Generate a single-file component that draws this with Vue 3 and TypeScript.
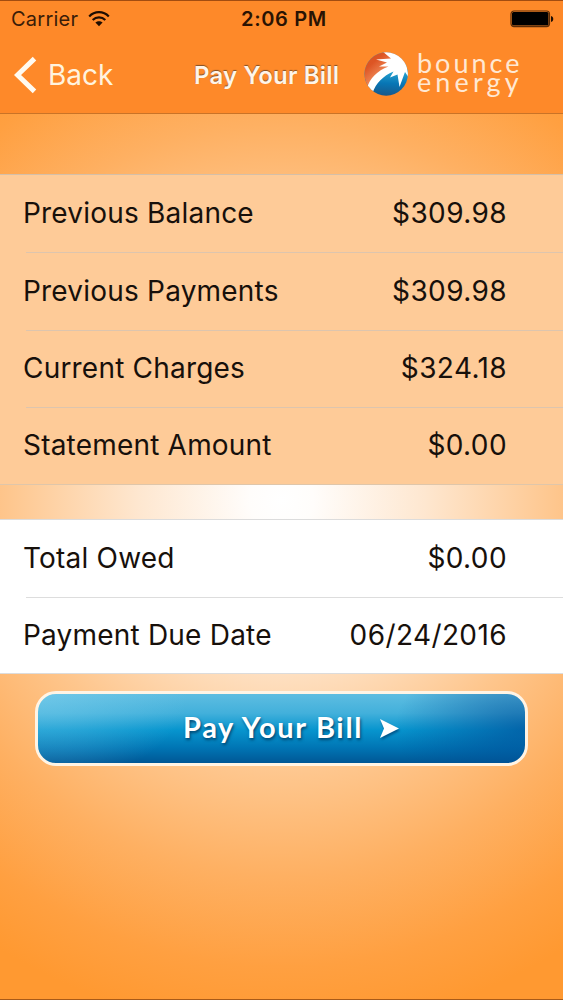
<script setup lang="ts">
interface BillRow {
  label: string
  value: string
}

const charges: BillRow[] = [
  { label: 'Previous Balance', value: '$309.98' },
  { label: 'Previous Payments', value: '$309.98' },
  { label: 'Current Charges', value: '$324.18' },
  { label: 'Statement Amount', value: '$0.00' },
]

const totals: BillRow[] = [
  { label: 'Total Owed', value: '$0.00' },
  { label: 'Payment Due Date', value: '06/24/2016' },
]
</script>

<template>
  <main class="screen">
    <header class="top">
      <div class="status">
        <div class="carrier">
          <span>Carrier</span>
          <svg class="wifi" viewBox="0 0 22 16" width="22" height="16">
            <g fill="none" stroke="#1e0d02" stroke-width="2.2">
              <path d="M1.2 5.4C6.6-.2 15.400-.2 20.800 5.400" />
              <path d="M4.700 9C8.200 5.500 13.800 5.500 17.300 9" />
            </g>
            <path d="M7.400 11.600C9.500 9.700 12.500 9.700 14.600 11.600L11 15.300Z" fill="#1e0d02" />
          </svg>
        </div>
        <span class="time">2:06 PM</span>
        <svg class="battery" viewBox="0 0 44 18" width="44" height="18">
          <rect x="1" y="1" width="38.500" height="15.600" rx="3" fill="none" stroke="#5a2c08" stroke-width="1.200" />
          <rect x="2" y="2" width="36.500" height="13.600" rx="1.500" fill="#000" />
          <path d="M41 6C44 6.500 44 11.500 41 12Z" fill="#1e0d02" />
        </svg>
      </div>
      <nav class="nav">
        <button class="back" type="button">
          <svg viewBox="0 0 24 38" width="24" height="38">
            <path d="M20.500 2.600L3.500 19L20.500 35.400" fill="none" stroke="#fffaf0" stroke-width="5" />
          </svg>
          <span>Back</span>
        </button>
        <h1 class="title">Pay Your Bill</h1>
        <div class="brand">
          <svg class="ball" viewBox="0 0 45 46" width="45" height="46">
            <defs>
              <linearGradient id="ballRed" x1="0" y1="0" x2="1" y2="1">
                <stop offset="0" stop-color="#d9531f" />
                <stop offset=".25" stop-color="#dd5524" />
                <stop offset=".5" stop-color="#f08a58" />
              </linearGradient>
              <linearGradient id="ballBlue" x1=".5" y1="0" x2=".45" y2="1">
                <stop offset=".4" stop-color="#2aa9d4" />
                <stop offset=".7" stop-color="#0876b5" />
                <stop offset="1" stop-color="#1a5585" />
              </linearGradient>
              <clipPath id="ballClip"><circle cx="22.200" cy="23" r="21.700" /></clipPath>
            </defs>
            <g clip-path="url(#ballClip)">
              <rect width="45" height="46" fill="url(#ballBlue)" />
              <path d="M0 0H45V12L21 20Q9 27 4 39H0Z" fill="url(#ballRed)" />
              <path d="M3 37C6 27 13 20 24.500 15.500L15 15.500L23 11.500L12 8.500L27 7.500L18 0C30-1 38 4 42 11L45 27L41 21L35.500 36L33.500 23.500L26 26.500L29.500 20.500C19 25 12 32 8.500 42Z" fill="#fff" />
            </g>
          </svg>
          <div class="wordmark">
            <span class="bounce">bounce</span>
            <span class="energy">energy</span>
          </div>
        </div>
      </nav>
    </header>

    <section class="list charges">
      <div v-for="row in charges" :key="row.label" class="row">
        <span class="label">{{ row.label }}</span>
        <span class="value">{{ row.value }}</span>
      </div>
    </section>

    <section class="list totals">
      <div v-for="row in totals" :key="row.label" class="row">
        <span class="label">{{ row.label }}</span>
        <span class="value">{{ row.value }}</span>
      </div>
    </section>

    <button class="pay" type="button">
      <span>Pay Your Bill</span>
      <svg viewBox="0 0 21 21" width="21" height="21">
        <path d="M1 1L20 10.500L1 20L5 10.500Z" fill="#fff" />
      </svg>
    </button>
  </main>
</template>

<style>
body {
  margin: 0;
}
</style>

<style scoped>
.screen {
  box-sizing: border-box;
  width: 563px;
  height: 1000px;
  overflow: hidden;
  display: flex;
  flex-direction: column;
  font-family: Inter, "Liberation Sans", sans-serif;
  color: #17100b;
  border-bottom: 1px solid #a85a18;
  background: radial-gradient(ellipse 530px 530px at 50% 500px, #fff 0%, #fffdfb 6%, #fee7d0 27%, #fec68d 52%, #feb062 71%, #ffa041 88%, #ff9931 100%);
}
.top {
  box-sizing: border-box;
  flex: none;
  height: 114px;
  background: #fe8929;
  border-top: 1px solid #a34c10;
  border-bottom: 1px solid #c97327;
}
.status {
  height: 36px;
  display: grid;
  grid-template-columns: 1fr auto 1fr;
  align-items: center;
  padding: 0 9px 0 11px;
  font-size: 20px;
}
.carrier {
  display: flex;
  align-items: center;
  gap: 10px;
  color: #3a1c08;
  letter-spacing: .25px;
}
.time {
  font-weight: 600;
  color: #2a1303;
  letter-spacing: .65px;
  margin-left: 3px;
}
.battery {
  justify-self: end;
}
.nav {
  height: 76px;
  display: flex;
  align-items: center;
}
button {
  border: 0;
  background: none;
  font-family: inherit;
}
.back {
  width: 194px;
  box-sizing: border-box;
  padding: 0 0 0 14px;
  display: flex;
  align-items: center;
  gap: 10px;
  color: #fff3df;
  font-size: 28px;
}
.title {
  width: 170px;
  margin: 0;
  font-size: 24px;
  font-weight: 600;
  letter-spacing: .15px;
  color: #fff5e9;
  white-space: nowrap;
  text-shadow: 0 -1px 1px #805028;
}
.brand {
  display: flex;
  align-items: center;
  gap: 8px;
  margin-bottom: 3px;
}
.wordmark {
  display: flex;
  flex-direction: column;
  margin-bottom: 3px;
  font-family: Lato, sans-serif;
  font-size: 27px;
  line-height: 19px;
  color: #ffe8d3;
}
.bounce {
  letter-spacing: 3px;
}
.energy {
  letter-spacing: 4.100px;
}
.list {
  box-sizing: border-box;
  flex: none;
  border-top: 1px solid #d5bfa8;
  border-bottom: 1px solid #dfc6aa;
  font-size: 28px;
}
.charges {
  height: 311px;
  margin-top: 60px;
  background: #fecb98;
}
.totals {
  height: 155px;
  margin-top: 34px;
  background: #fff;
  border-color: #dcdcdc;
}
.row {
  box-sizing: border-box;
  height: 77.250px;
  margin-left: 26px;
  padding: 0 56px 1px 0;
  display: flex;
  align-items: center;
  justify-content: space-between;
}
.totals .row {
  height: 76.500px;
}
.label {
  margin-left: -3px;
  letter-spacing: .2px;
}
.value {
  letter-spacing: .4px;
}
.row + .row {
  border-top: 1px solid #ddc5ae;
}
.totals .row + .row {
  border-color: #ddd;
}
.pay {
  box-sizing: border-box;
  width: 493px;
  height: 75px;
  flex: none;
  margin: 17px 0 0 35px;
  padding: 0 0 4px 145px;
  border: 3px solid #fff4e5;
  border-radius: 21px;
  display: flex;
  align-items: center;
  gap: 16px;
  background:
    radial-gradient(ellipse 150px 90px at 0 0, rgba(130, 210, 238, .5), transparent),
    radial-gradient(ellipse 130px 80px at 100% 50%, rgba(0, 75, 150, .65), transparent),
    linear-gradient(#5ebde1 0%, #42b0db 28%, #0795ce 52%, #0075b4 78%, #005795 100%);
  color: #fff;
  font-family: Lato, sans-serif;
  font-size: 29px;
  font-weight: 700;
  letter-spacing: 1.650px;
  text-shadow: 1px 2px 3px #00456f;
}
.pay svg {
  position: relative;
  top: 2px;
  filter: drop-shadow(1px 2px 1px #00558a);
}
</style>
